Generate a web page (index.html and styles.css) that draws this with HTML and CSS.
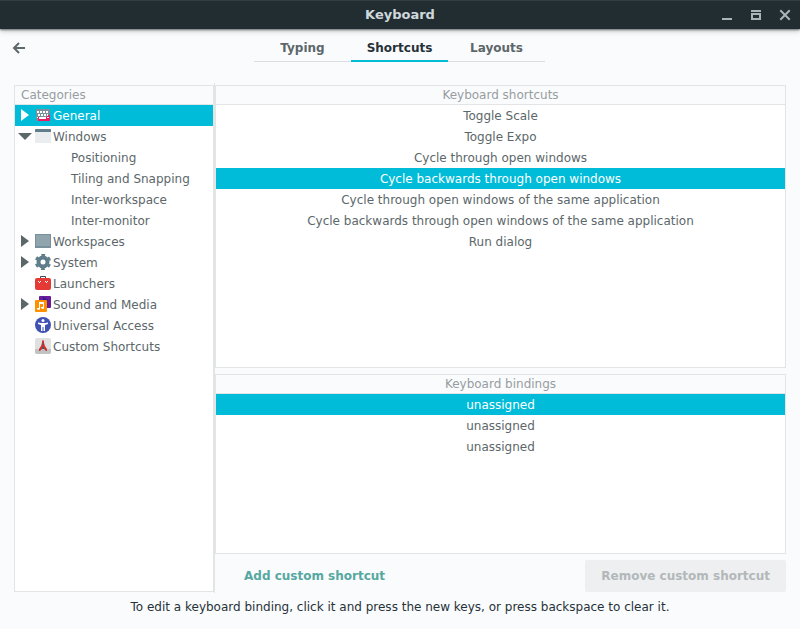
FILE: index.html
```html
<!DOCTYPE html>
<html lang="en">
<head>
<meta charset="utf-8">
<title>Keyboard</title>
<link rel="stylesheet" href="styles.css">
</head>
<body>
<header class="titlebar">
  <h1 class="title">Keyboard</h1>
  <div class="window-controls">
    <button class="control" aria-label="Minimize"><svg width="12" height="12" viewBox="0 0 12 12"><path d="M1 9h10v2H1z"/></svg></button>
    <button class="control" aria-label="Maximize"><svg width="12" height="12" viewBox="0 0 12 12"><path d="M1 1h10v2H1zM1 4h10v7H1zM3 6v3h6V6z" fill-rule="evenodd"/></svg></button>
    <button class="control" aria-label="Close"><svg width="12" height="12" viewBox="0 0 12 12"><path d="M2 2l8 8M10 2l-8 8" stroke="#a9b5ba" stroke-width="2" stroke-linecap="square"/></svg></button>
  </div>
</header>
<nav class="toolbar">
  <button class="back" aria-label="Back"><svg width="14" height="14" viewBox="0 0 14 14"><path d="M7 2L2 7l5 5M2 7h11" fill="none" stroke="#5d686b" stroke-width="2"/></svg></button>
  <div class="tabs" role="tablist">
    <button class="tab" role="tab">Typing</button>
    <button class="tab active" role="tab" aria-selected="true">Shortcuts</button>
    <button class="tab" role="tab">Layouts</button>
  </div>
</nav>
<main class="content">
  <section class="sidebar">
    <h2 class="list-head side-head">Categories</h2>
    <ul class="tree" role="tree">
      <li class="node selected" role="treeitem" aria-selected="true">
        <svg class="arrow" viewBox="0 0 16 16"><path d="M4 2l8 6-8 6z"/></svg>
        <svg class="icon" viewBox="0 0 16 16"><path fill="#78909c" d="M1 2h14v12H1z"/><path fill="#e91e63" d="M12 8h3v6H3v-4h9z"/><path fill="#fff" d="M2 4h2v2H2zM5 4h2v2H5zM8 4h2v2H8zM11 4h2v2h-2zM3 7h2v2H3zM6 7h2v2H6zM9 7h2v2H9zM12 7h1v2h-1zM2 10h1v1H2zM4 10h7v2H4zM12 10h2v1h-2z"/></svg>
        <span>General</span>
      </li>
      <li class="node" role="treeitem" aria-expanded="true">
        <svg class="arrow" viewBox="0 0 16 16"><path d="M1 5h14l-7 7z"/></svg>
        <svg class="icon" viewBox="0 0 16 16"><path fill="#e9edf0" d="M0 1h16v14H0z"/><path fill="#607d8b" d="M0 4V2q0-1 1-1h14q1 0 1 1v2z"/></svg>
        <span>Windows</span>
      </li>
      <li class="node child" role="treeitem">Positioning</li>
      <li class="node child" role="treeitem">Tiling and Snapping</li>
      <li class="node child" role="treeitem">Inter-workspace</li>
      <li class="node child" role="treeitem">Inter-monitor</li>
      <li class="node" role="treeitem">
        <svg class="arrow" viewBox="0 0 16 16"><path d="M4 2l8 6-8 6z"/></svg>
        <svg class="icon" viewBox="0 0 16 16"><path fill="#78909c" d="M0 1h16v14H0z"/><path fill="#90a4ae" d="M1 2h14v11H1z"/></svg>
        <span>Workspaces</span>
      </li>
      <li class="node" role="treeitem">
        <svg class="arrow" viewBox="0 0 16 16"><path d="M4 2l8 6-8 6z"/></svg>
        <svg class="icon" viewBox="0 0 16 16"><circle cx="8" cy="8" r="4.500" fill="none" stroke="#607d8b" stroke-width="4"/><circle cx="8" cy="8" r="7" fill="none" stroke="#607d8b" stroke-width="2.400" stroke-dasharray="3.600 3.730" stroke-dashoffset="1.800" transform="rotate(30 8 8)"/></svg>
        <span>System</span>
      </li>
      <li class="node" role="treeitem">
        <span class="arrow"></span>
        <svg class="icon" viewBox="0 0 16 16"><path d="M5.500 3V1.500h5V3" fill="none" stroke="#37474f"/><rect y="3" width="16" height="12" rx="2" fill="#e53935"/><path d="M3 6h1v1H3zM4 7h1v1H4zM5 6h1v1H5zM10 6h1v1h-1zM11 7h1v1h-1zM12 6h1v1h-1z" fill="#fff"/></svg>
        <span>Launchers</span>
      </li>
      <li class="node" role="treeitem">
        <svg class="arrow" viewBox="0 0 16 16"><path d="M4 2l8 6-8 6z"/></svg>
        <svg class="icon" viewBox="0 0 16 16"><rect x="4" width="12" height="12" rx="1" fill="#6a1b9a"/><path fill="#311b92" d="M8 1l5 3-5 2z"/><rect y="4" width="12" height="12" rx="1" fill="#ff9100"/><path fill="#fff" d="M4 6h5v6q0 1-1 1T6 12t1-1h1V8H5v5q0 1-1 1t-2-1 1-1h1z"/></svg>
        <span>Sound and Media</span>
      </li>
      <li class="node" role="treeitem">
        <span class="arrow"></span>
        <svg class="icon" viewBox="0 0 16 16"><circle cx="8" cy="8" r="8" fill="#3f51b5"/><circle cx="8" cy="3.500" r="1.500" fill="#fff"/><path fill="#fff" d="M3 5.500l3 .5h4l3-.5V7l-3 1v6H8.500v-4h-1v4H6V8L3 7z"/></svg>
        <span>Universal Access</span>
      </li>
      <li class="node" role="treeitem">
        <span class="arrow"></span>
        <svg class="icon" viewBox="0 0 16 16"><rect width="16" height="16" rx="2" fill="#dfe1e1"/><path d="M0 11h16v3a2 2 0 0 1-2 2H2a2 2 0 0 1-2-2z" fill="#c0c3c4"/><path fill="#d32f2f" d="M8 2l1 1v2l1 3 2 3v2h-1l-2-2H7l-2 2H4v-2l2-3 1-3V3z"/><path fill="#455a64" d="M7.500 5h1v2h-1zM7 9h2v2H7z"/></svg>
        <span>Custom Shortcuts</span>
      </li>
    </ul>
  </section>
  <section class="details">
    <div class="list-box shortcuts">
      <table class="list">
        <thead><tr><th class="list-head">Keyboard shortcuts</th></tr></thead>
        <tbody>
          <tr><td>Toggle Scale</td></tr>
          <tr><td>Toggle Expo</td></tr>
          <tr><td>Cycle through open windows</td></tr>
          <tr class="selected"><td>Cycle backwards through open windows</td></tr>
          <tr><td>Cycle through open windows of the same application</td></tr>
          <tr><td>Cycle backwards through open windows of the same application</td></tr>
          <tr><td>Run dialog</td></tr>
        </tbody>
      </table>
    </div>
    <div class="list-box bindings">
      <table class="list">
        <thead><tr><th class="list-head">Keyboard bindings</th></tr></thead>
        <tbody>
          <tr class="selected"><td>unassigned</td></tr>
          <tr><td>unassigned</td></tr>
          <tr><td>unassigned</td></tr>
        </tbody>
      </table>
    </div>
    <div class="actions">
      <button class="action add">Add custom shortcut</button>
      <button class="action remove" disabled>Remove custom shortcut</button>
    </div>
  </section>
</main>
<footer class="hint">To edit a keyboard binding, click it and press the new keys, or press backspace to clear it.</footer>
</body>
</html>
```
FILE: styles.css
```css
* { box-sizing: border-box; }

body {
  margin: 0;
  min-height: 100vh;
  display: flex;
  flex-direction: column;
  background: #fafbfd;
  color: #5c676a;
  font: 12px/20px "DejaVu Sans", sans-serif;
}

button {
  margin: 0;
  padding: 0;
  border: 0;
  background: none;
  color: inherit;
  font: inherit;
}

svg { display: block; }

.titlebar {
  display: grid;
  grid-template-columns: 1fr auto 1fr;
  align-items: center;
  height: 29px;
  padding: 0 9px;
  background: #222d32;
  border-top: 1px solid #313d42;
  box-shadow: 0 1px 2px rgba(0, 0, 0, .5), 0 2px 6px rgba(0, 0, 0, .2);
}

.title {
  grid-column: 2;
  margin: 0;
  font-size: 13px;
  line-height: 20px;
  color: #cfd8dc;
}

.window-controls {
  display: flex;
  justify-content: flex-end;
  gap: 17px;
}

.control { fill: #a9b5ba; }

.toolbar {
  display: grid;
  grid-template-columns: 1fr auto 1fr;
  height: 54px;
  padding: 5px 13px 0 12px;
}

.back {
  justify-self: start;
  align-self: start;
  padding: 7px 0;
}

.tabs {
  display: grid;
  grid-template-columns: repeat(3, 97px);
  height: 28px;
}

.tab {
  border-bottom: 1px solid #dcdfe1;
  padding-top: 1px;
  font-weight: bold;
  line-height: 24px;
}

.tab.active {
  border-bottom: 2px solid #00bcd4;
  padding-top: 2px;
  color: #263238;
}

.content {
  flex: 1;
  display: grid;
  grid-template-columns: 201px 1fr;
  padding: 0 14px;
}

.sidebar {
  position: relative;
  margin: 2px 0 1px;
  border: 1px solid #e2e4e5;
  border-right-width: 2px;
  background: #fff;
}

.sidebar::after {
  content: "";
  position: absolute;
  top: -3px;
  bottom: -2px;
  right: -2px;
  width: 1px;
  background: #e2e4e5;
}

.list-head {
  height: 19px;
  margin: 0;
  padding: 0;
  border-bottom: 1px solid #e2e4e5;
  background: #fafbfd;
  color: #979da0;
  font-size: 12px;
  font-weight: normal;
  line-height: 18px;
}

.side-head { padding-left: 6px; }

.tree {
  margin: 0;
  padding: 0;
  list-style: none;
}

.node {
  display: flex;
  height: 21px;
  padding: 1px 0 0 2px;
}

.child { padding-left: 56px; }

.arrow,
.icon {
  width: 16px;
  height: 16px;
  margin: 1px 2px 0 0;
}

.arrow { fill: #5c676a; }

.selected {
  background: #00bcd8;
  color: #fff;
}

.selected .arrow { fill: #fff; }

.details {
  display: flex;
  flex-direction: column;
  gap: 6px;
  padding: 2px 0 1px;
}

.list-box {
  border: 1px solid #e2e4e5;
  background: #fff;
}

.shortcuts { flex: 283 0 0; }

.bindings { flex: 180 0 0; }

.list {
  width: 100%;
  border-spacing: 0;
  text-align: center;
}

.list td {
  height: 21px;
  padding: 1px 0 0;
}

.actions {
  display: flex;
  justify-content: space-between;
  height: 32px;
}

.action {
  padding: 0 16px;
  border-radius: 2px;
  font-weight: bold;
}

.add {
  margin-left: 13px;
  color: #56a8a1;
}

.remove {
  background: #eeeff0;
  color: #b2b8ba;
}

.hint {
  height: 36px;
  padding-top: 4px;
  color: #263238;
  text-align: center;
}
```
